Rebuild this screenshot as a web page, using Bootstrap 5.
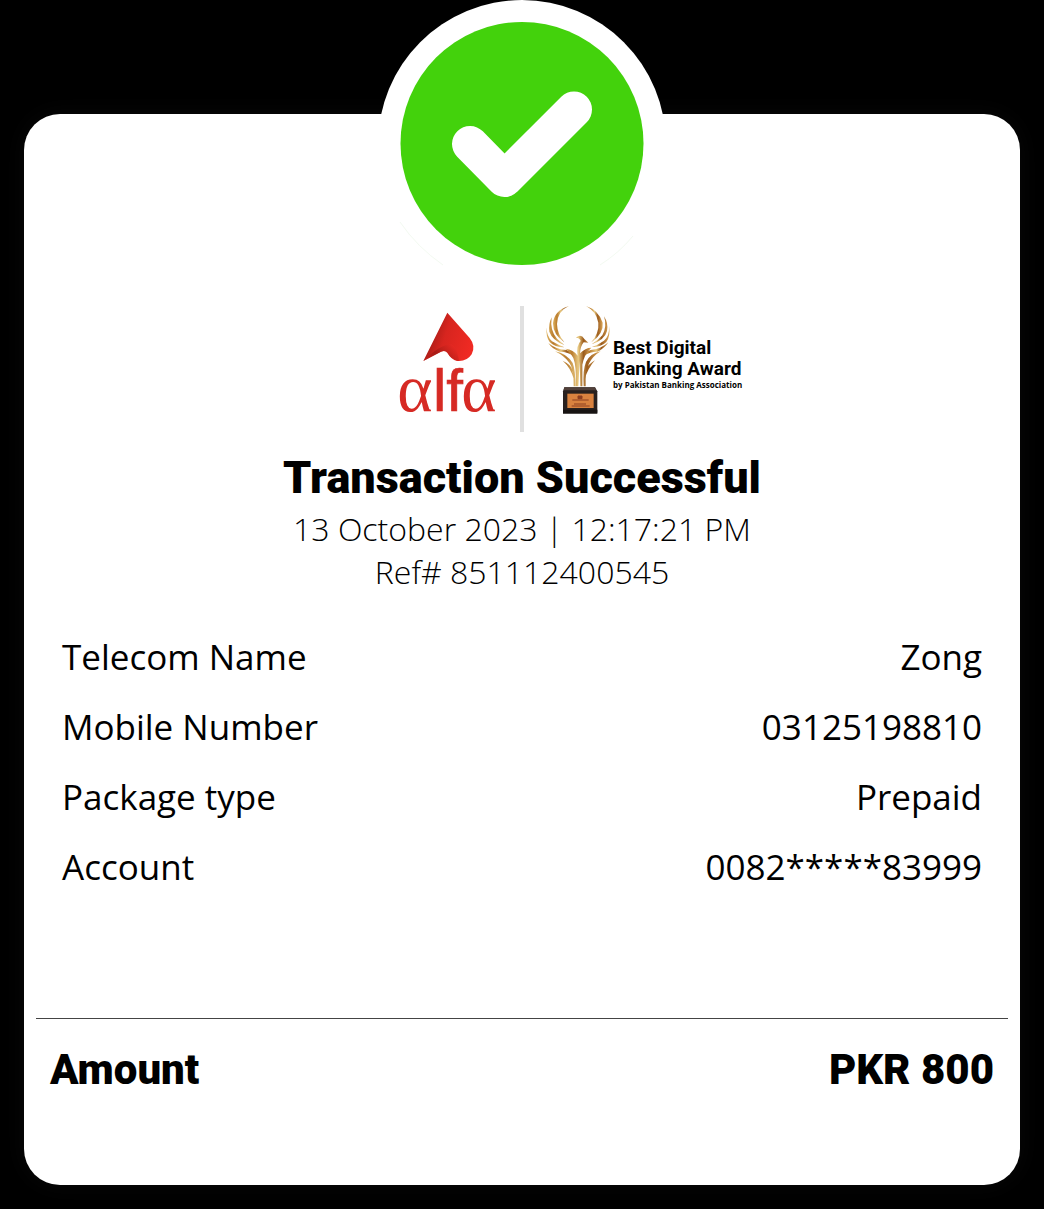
<!DOCTYPE html>
<html lang="en">
<head>
<meta charset="utf-8">
<meta name="viewport" content="width=device-width, initial-scale=1">
<title>Transaction Successful</title>
<link href="https://cdn.jsdelivr.net/npm/bootstrap@5.3.0/dist/css/bootstrap.min.css" rel="stylesheet">
<style>
  body { display: flow-root; background: #000; color: #000; font-family: Roboto, "Noto Sans", sans-serif; }
  .receipt { margin: 114px 24px 24px; padding-bottom: 80px; border-radius: 36px; box-shadow: 0 0 24px rgba(255, 255, 255, .035); }
  .status-icon { display: block; margin: -114px auto 0; }
  .brand-row { margin-top: 18px; }
  .brand-side { padding: 0 21px; }
  .brand-rule { width: 4px; height: 126px; background: #e0e0e0; }
  .award-copy { padding-top: 31px; font-weight: 700; }
  .award-name { font-size: 19px; line-height: 21px; }
  .award-by { font-family: "Open Sans", sans-serif; font-size: 8px; line-height: 11px; font-weight: 700; }
  .receipt-title { margin-top: 17px; font-size: 45px; line-height: 58px; font-weight: 900; }
  .receipt-meta { font-family: "Open Sans", "Noto Sans", sans-serif; font-size: 32px; line-height: 43px; font-weight: 300; }
  .receipt-list { margin: 29px 38px 0; min-height: 396px; font-family: "Open Sans", "Noto Sans", sans-serif; font-size: 35px; line-height: 70px; }
  .receipt-list dt, .receipt-list dd { margin: 0; font-weight: 400; }
  .receipt-total { margin: 0 12px; padding: 16px 14px 0; border-top: 1px solid #444; font-size: 42px; line-height: 70px; font-weight: 900; }
</style>
</head>
<body>
<main class="receipt bg-white d-flex flex-column">
  <svg class="status-icon" width="288" height="288" viewBox="0 0 288 288" role="img" aria-label="Success">
    <circle cx="144" cy="144" r="144" fill="#fff"/>
    <path d="M22 222Q39 247 65 265M222 265Q241 253 255 236" fill="none" stroke="#f3faf1" stroke-width="1"/>
    <circle cx="144" cy="143.500" r="121.500" fill="#43d20c"/>
    <path d="M92 144l34.500 35L196 109.500" fill="none" stroke="#fff" stroke-width="36" stroke-linecap="round" stroke-linejoin="round"/>
  </svg>

  <section class="brand-row d-flex">
    <div class="brand-side col d-flex justify-content-end">
      <svg width="102" height="126" viewBox="36 32 306 378" role="img" aria-label="alfa">
        <defs>
          <linearGradient id="sail" x1="0" y1="0.300" x2="1" y2="0.600">
            <stop offset="0" stop-color="#8f1712"/><stop offset=".45" stop-color="#d7251f"/><stop offset="1" stop-color="#f02a23"/>
          </linearGradient>
          <linearGradient id="fold" x1="0" y1="0.800" x2="1" y2="0.300">
            <stop offset="0" stop-color="#c91f1a"/><stop offset=".4" stop-color="#981813"/><stop offset="1" stop-color="#ec2a24"/>
          </linearGradient>
        </defs>
        <path d="M187 52L254 128Q273 152 260 177Q245 200 216 197Q199 193 187 172Q181 164 168 169L115 197Z" fill="url(#sail)"/>
        <path d="M115 197Q166 148 196 147Q215 149 222 197Q199 193 187 172Q181 164 168 169Z" fill="url(#fold)" opacity=".7"/>
        <g fill="#d62a24">
          <text x="37" y="346" font-family="Liberation Serif, serif" font-size="202">α</text>
          <text x="144" y="346" font-family="Liberation Sans, sans-serif" font-size="180" stroke="#d62a24" stroke-width="2">lf</text>
          <text x="229" y="346" font-family="Liberation Serif, serif" font-size="202">α</text>
        </g>
      </svg>
    </div>
    <div class="brand-rule"></div>
    <div class="brand-side col d-flex">
      <svg class="flex-shrink-0" width="68" height="108" viewBox="30 34 204 324" role="img" aria-label="Award trophy">
        <defs>
          <linearGradient id="gold" x1="0" x2="1">
            <stop offset="0" stop-color="#dfb461"/><stop offset=".25" stop-color="#b97b2d"/><stop offset=".5" stop-color="#e9ca82"/><stop offset=".7" stop-color="#9b5b1c"/><stop offset="1" stop-color="#dda95a"/>
          </linearGradient>
        </defs>
        <g fill="url(#gold)">
          <path d="M102 34Q68 48 66 88Q67 118 88 143Q54 120 54 86Q57 48 102 34Z"/>
          <path d="M153 34Q190 46 203 84Q207 116 169 143Q193 114 190 84Q184 50 153 34Z"/>
          <path d="M50 68Q44 108 66 132L88 151Q52 137 43 111Q40 88 50 68ZM35 98Q35 126 51 140Q70 151 88 158Q59 158 44 142Q32 126 35 98ZM40 145Q64 165 94 166Q110 171 121 186Q94 170 75 171Q51 163 40 145Z"/>
          <path d="M207 65Q217 96 202 122Q187 139 170 149Q210 135 216 109Q221 86 207 65ZM222 94Q224 124 207 138Q188 151 171 157Q199 157 214 142Q227 124 222 94ZM220 143Q197 164 167 166Q150 171 144 184Q168 170 188 171Q210 160 220 143Z"/>
          <path d="M123 129Q138 116 148 133L160 144L146 143Q137 153 135 176Q151 159 169 159Q147 180 142 210V275H136L134 198L130 275H122Q125 215 115 190Q104 170 91 162Q116 165 128 183Q124 151 137 139Q135 130 123 129Z"/>
          <path d="M60 170Q94 176 113 205Q121 225 122 275H116Q117 221 103 204Q87 183 60 170ZM197 170Q166 176 153 202Q143 225 146 275H152Q150 225 163 205Q174 184 197 170ZM83 198Q107 209 112 225Q115 239 116 252Q107 219 83 198ZM180 197Q158 210 153 225L149 253Q160 219 180 197Z"/>
        </g>
        <path d="M88 278H180L187 290V354H84V290Z" fill="#29211f"/>
        <path d="M88 278H180L183 287H86Z" fill="#51403a"/>
        <path d="M84 345H187V357H84Z" fill="#171312"/>
        <path d="M97 297H176V340H97Z" fill="#d9823f"/>
        <path d="M129 304H141V312H129ZM112 316H161M117 328H153M110 334H164" fill="#8c3f20" stroke="#8c3f20" stroke-width="3"/>
      </svg>
      <div class="award-copy text-nowrap">
        <div class="award-name">Best Digital<br>Banking Award</div>
        <div class="award-by">by Pakistan Banking Association</div>
      </div>
    </div>
  </section>

  <header class="text-center">
    <h1 class="receipt-title mb-0">Transaction Successful</h1>
    <div class="receipt-meta">13 October 2023 | 12:17:21 PM</div>
    <div class="receipt-meta">Ref# 851112400545</div>
  </header>

  <dl class="receipt-list">
    <div class="d-flex justify-content-between"><dt>Telecom Name</dt><dd>Zong</dd></div>
    <div class="d-flex justify-content-between"><dt>Mobile Number</dt><dd>03125198810</dd></div>
    <div class="d-flex justify-content-between"><dt>Package type</dt><dd>Prepaid</dd></div>
    <div class="d-flex justify-content-between"><dt>Account</dt><dd>0082*****83999</dd></div>
  </dl>

  <div class="receipt-total d-flex justify-content-between"><span>Amount</span><span>PKR 800</span></div>
</main>
<script src="https://cdn.jsdelivr.net/npm/bootstrap@5.3.0/dist/js/bootstrap.bundle.min.js"></script>
</body>
</html>
